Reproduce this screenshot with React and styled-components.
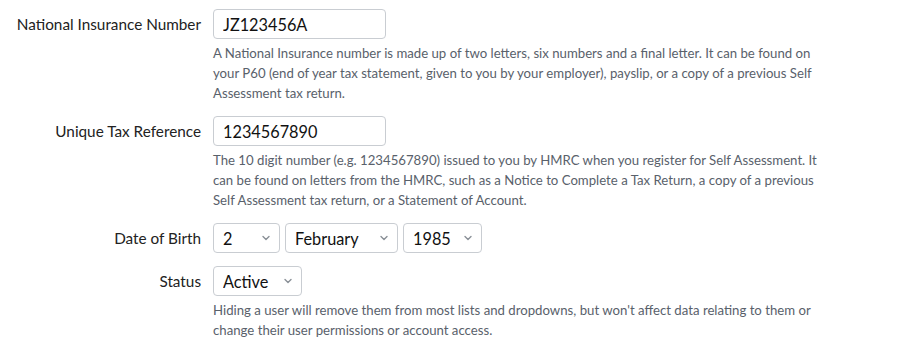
import React from "react";
import styled, { createGlobalStyle } from "styled-components";

const Global = createGlobalStyle`
  html, body { margin: 0; padding: 0; background: #fff; }
  body { font-family: "Lato", "Liberation Sans", sans-serif; color: #222; }
  * { box-sizing: border-box; }
`;

const Form = styled.form`
  display: flex;
  flex-direction: column;
  gap: 13px;
  padding: 9px 0 0 0;
`;

const Row = styled.div`
  display: grid;
  grid-template-columns: 201px 1fr;
  column-gap: 12px;
  align-items: start;
`;

const Label = styled.label`
  text-align: right;
  font-size: 15.3px;
  line-height: 30px;
  color: #222;
`;

const Field = styled.div`
  display: flex;
  flex-direction: column;
`;

const TextInput = styled.input`
  width: ${(p) => p.$w}px;
  height: 30px;
  border: 1px solid #c9cdd2;
  border-radius: 4px;
  padding: 0 9px;
  font-family: inherit;
  font-size: 16.3px;
  color: #111;
  outline: none;
`;

const Help = styled.p`
  margin: 4px 0 0 0;
  max-width: 615px;
  font-size: 13.2px;
  line-height: 20px;
  color: #59616b;
`;

const Selects = styled.div`
  display: flex;
  gap: 5px;
`;

const SelectWrap = styled.div`
  position: relative;
  width: ${(p) => p.$w}px;
  height: 30px;
`;

const Select = styled.select`
  appearance: none;
  -webkit-appearance: none;
  width: 100%;
  height: 100%;
  border: 1px solid #c9cdd2;
  border-radius: 4px;
  padding: 0 24px 0 9px;
  background: #fff;
  font-family: inherit;
  font-size: 16.3px;
  color: #111;
  outline: none;
`;

const Chevron = styled.svg`
  position: absolute;
  right: 10px;
  top: 12px;
  width: 8px;
  height: 6px;
  pointer-events: none;
`;

const Dropdown = ({ w, value, options }) => (
  <SelectWrap $w={w}>
    <Select defaultValue={value}>
      {options.map((o) => (
        <option key={o}>{o}</option>
      ))}
    </Select>
    <Chevron viewBox="0 0 8 6">
      <path d="M1 1.5 L4 4.5 L7 1.5" fill="none" stroke="#8a9097" strokeWidth="1.4" strokeLinecap="round" strokeLinejoin="round" />
    </Chevron>
  </SelectWrap>
);

const months = ["January","February","March","April","May","June","July","August","September","October","November","December"];

export default function App() {
  return (
    <>
      <Global />
      <Form>
        <Row>
          <Label>National Insurance Number</Label>
          <Field>
            <TextInput $w={173} defaultValue="JZ123456A" />
            <Help>
              A National Insurance number is made up of two letters, six numbers and a final letter. It can be found on
              your P60 (end of year tax statement, given to you by your employer), payslip, or a copy of a previous Self
              Assessment tax return.
            </Help>
          </Field>
        </Row>
        <Row>
          <Label>Unique Tax Reference</Label>
          <Field>
            <TextInput $w={173} defaultValue="1234567890" />
            <Help>
              The 10 digit number (e.g. 1234567890) issued to you by HMRC when you register for Self Assessment. It
              can be found on letters from the HMRC, such as a Notice to Complete a Tax Return, a copy of a previous
              Self Assessment tax return, or a Statement of Account.
            </Help>
          </Field>
        </Row>
        <Row>
          <Label>Date of Birth</Label>
          <Selects>
            <Dropdown w={67} value="2" options={Array.from({ length: 31 }, (_, i) => String(i + 1))} />
            <Dropdown w={113} value="February" options={months} />
            <Dropdown w={79} value="1985" options={Array.from({ length: 80 }, (_, i) => String(1950 + i))} />
          </Selects>
        </Row>
        <Row>
          <Label>Status</Label>
          <Field>
            <Dropdown w={89} value="Active" options={["Active", "Hidden"]} />
            <Help>
              Hiding a user will remove them from most lists and dropdowns, but won't affect data relating to them or
              change their user permissions or account access.
            </Help>
          </Field>
        </Row>
      </Form>
    </>
  );
}
